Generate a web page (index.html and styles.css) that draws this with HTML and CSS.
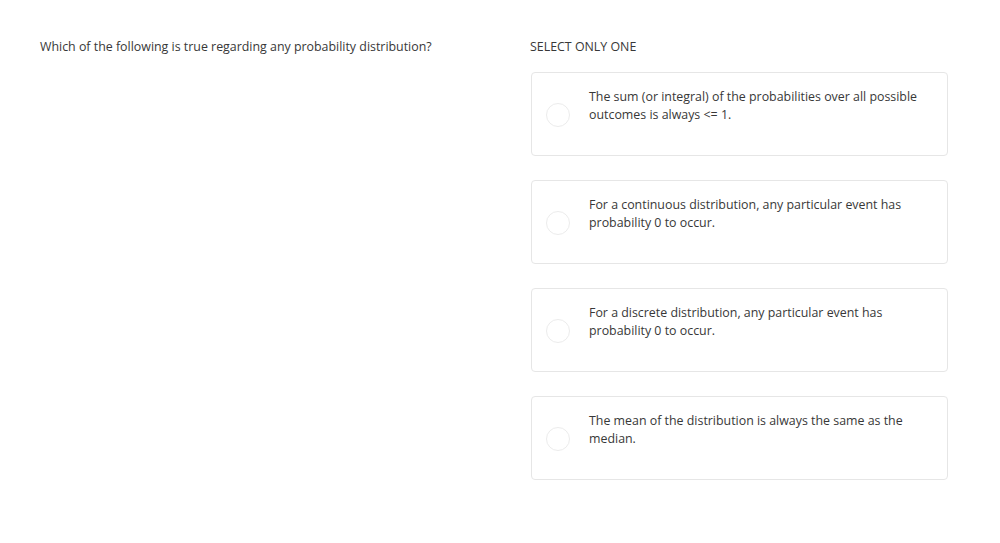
FILE: index.html
```html
<!DOCTYPE html>
<html>
<head>
<meta charset="utf-8">
<link rel="stylesheet" href="styles.css">
</head>
<body>
<div class="page">
  <div class="question">Which of the following is true regarding any probability distribution?</div>
  <div class="answers">
    <div class="instruction">SELECT ONLY ONE</div>
    <div class="options">
      <div class="option"><span class="radio"></span><div class="label">The sum (or integral) of the probabilities over all possible outcomes is always &lt;= 1.</div></div>
      <div class="option"><span class="radio"></span><div class="label">For a continuous distribution, any particular event has probability 0 to occur.</div></div>
      <div class="option"><span class="radio"></span><div class="label">For a discrete distribution, any particular event has probability 0 to occur.</div></div>
      <div class="option"><span class="radio"></span><div class="label">The mean of the distribution is always the same as the median.</div></div>
    </div>
  </div>
</div>
</body>
</html>
```

FILE: styles.css
```css
html, body {
  margin: 0;
  padding: 0;
  background: #fff;
}
body {
  font-family: "Open Sans", "Liberation Sans", sans-serif;
  font-size: 12.4px;
  color: #383838;
}
.page {
  display: flex;
  padding: 38px 52px 0 40px;
}
.question {
  width: 490px;
  line-height: 18px;
}
.answers {
  flex: 1;
}
.instruction {
  line-height: 18px;
  margin-bottom: 16px;
}
.options {
  display: flex;
  flex-direction: column;
  gap: 24px;
  padding-left: 1px;
}
.option {
  display: flex;
  align-items: flex-start;
  height: 84px;
  box-sizing: border-box;
  border: 1px solid #e6e6e6;
  border-radius: 4px;
  padding: 15px 22px 0 14px;
}
.radio {
  flex: none;
  width: 22px;
  height: 22px;
  border: 1.5px solid #ececec;
  border-radius: 50%;
  margin-top: 15px;
  margin-right: 19px;
}
.label {
  line-height: 18px;
}
```
